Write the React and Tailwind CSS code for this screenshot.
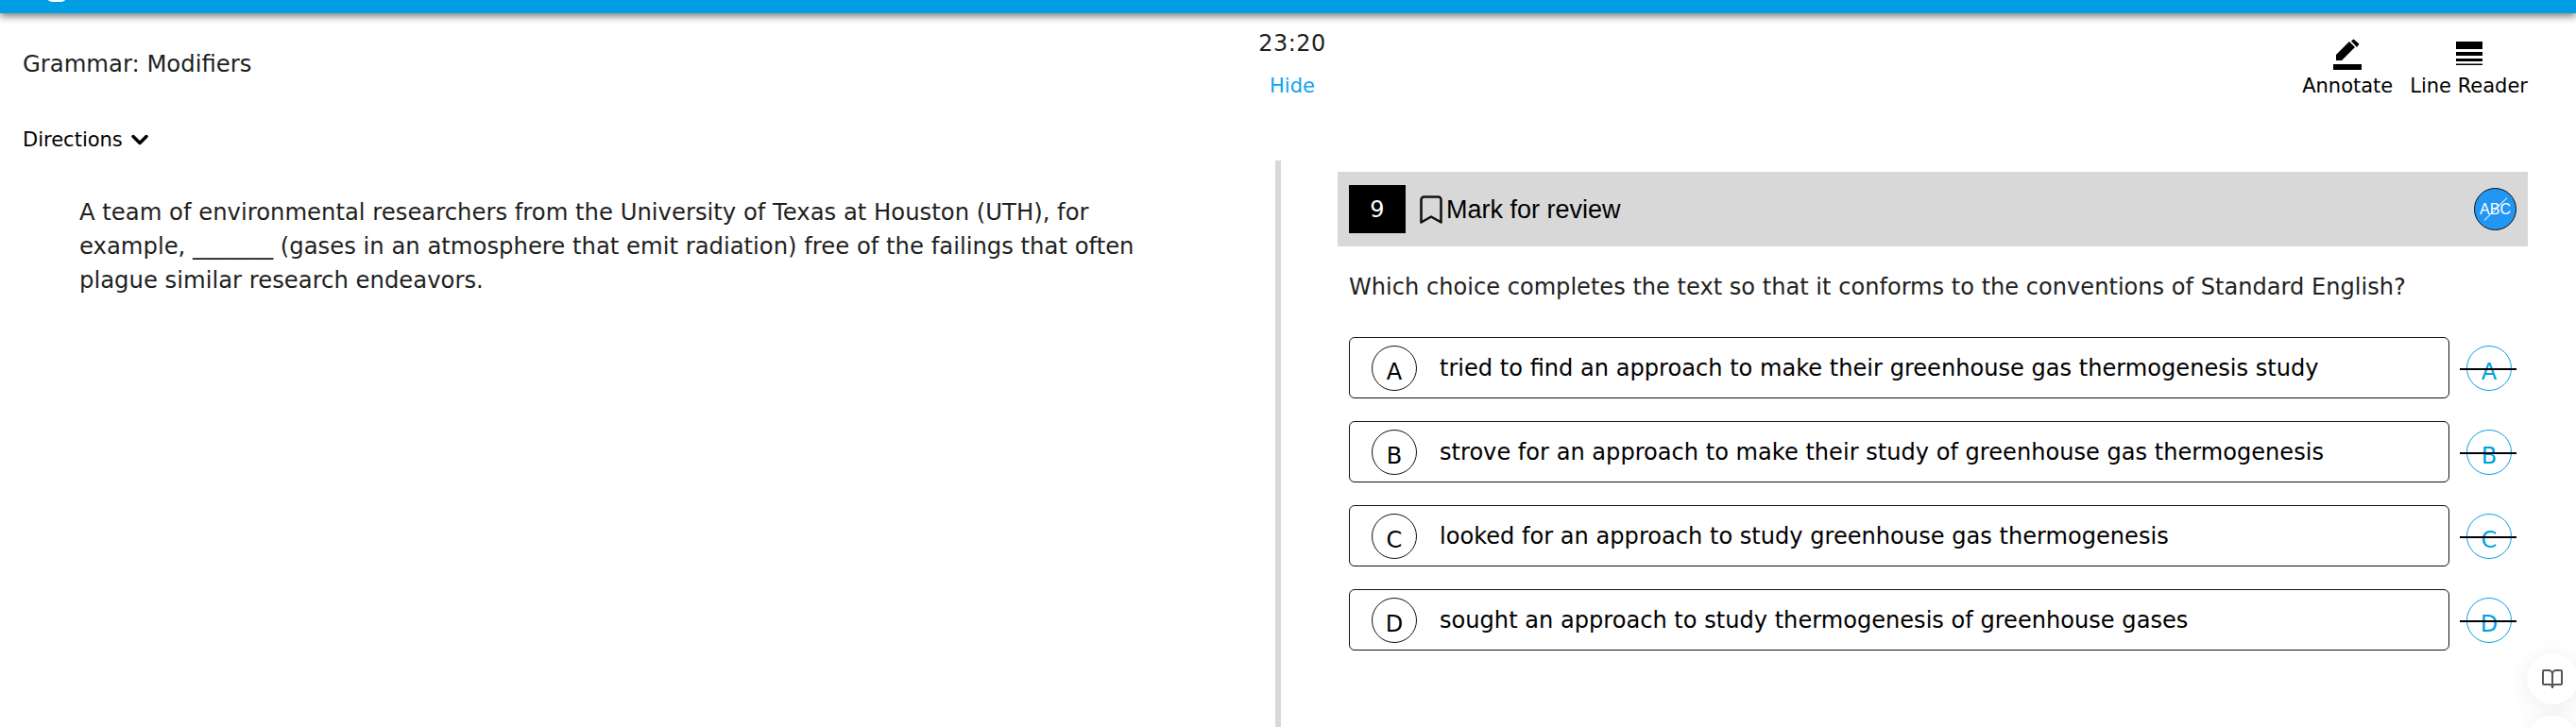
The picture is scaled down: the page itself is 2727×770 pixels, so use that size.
import React from "react";
import { Bookmark, BookOpen, ChevronDown } from "lucide-react";

const choices = [
  { letter: "A", text: "tried to find an approach to make their greenhouse gas thermogenesis study" },
  { letter: "B", text: "strove for an approach to make their study of greenhouse gas thermogenesis" },
  { letter: "C", text: "looked for an approach to study greenhouse gas thermogenesis" },
  { letter: "D", text: "sought an approach to study thermogenesis of greenhouse gases" },
];

const PencilIcon = () => (
  <svg width="30" height="34" viewBox="0 0 30 34" fill="#000">
    <rect x="0" y="27" width="30" height="6" />
    <path d="M3 23V17L17 3L23 9L9 23Z" />
    <path d="M19 1.5L21.5 -0.5L27.5 4.5L25 8Z" transform="translate(0 1)" />
  </svg>
);

const LinesIcon = () => (
  <svg width="28" height="26" viewBox="0 0 28 26" fill="#000">
    <rect x="0" y="0" width="28" height="8" />
    <rect x="0" y="11" width="28" height="4" />
    <rect x="0" y="18" width="28" height="3" />
    <rect x="0" y="23.5" width="28" height="1.5" />
  </svg>
);

const ChoiceRow = ({ letter, text }) => (
  <div className="flex items-center">
    <div className="flex h-[65px] w-[1165px] items-center rounded-[6px] border border-[#111] pl-[23px]">
      <div className="flex h-[48px] w-[48px] items-center justify-center rounded-full border border-[#111] pt-[8px] text-[24px] text-black">
        {letter}
      </div>
      <span className="ml-[24px] pt-[2px] text-[24.1px] text-black">{text}</span>
    </div>
    <div className="relative ml-[18px] flex h-[48px] w-[48px] items-center justify-center rounded-full border border-[#0a9fe6] pt-[8px] text-[24px] text-[#009fe3]">
      {letter}
      <div className="absolute left-[-8px] top-[23px] h-[2px] w-[60px] bg-black" />
    </div>
  </div>
);

const App = () => {
  return (
    <div className="relative flex h-[770px] w-[2727px] flex-col overflow-hidden bg-white font-['DejaVu_Sans',sans-serif] text-[#1f1f1f]">
      <div className="relative z-10 h-[14px] shrink-0 bg-[#009fe3] shadow-[0_3px_8px_rgba(0,0,0,0.55)]">
        <div className="absolute left-[50px] top-[-8px] h-[10px] w-[20px] rounded-full bg-white" />
      </div>

      <div className="flex h-[104px] shrink-0">
        <div className="flex w-[1268px] items-center pl-[24px] pt-[5px] text-[24.3px]">Grammar: Modifiers</div>
        <div className="flex w-[200px] flex-col items-center pt-[18px]">
          <div className="text-[24px] leading-[28px] tracking-[0.5px]">23:20</div>
          <div className="mt-[19px] text-[21px] leading-[24px] text-[#11a4ea]">Hide</div>
        </div>
        <div className="ml-auto flex gap-[18px] pr-[51px] pt-[27px] text-[21px] text-black">
          <div className="flex flex-col items-center">
            <PencilIcon />
            <span className="mt-[3px] leading-[26px]">Annotate</span>
          </div>
          <div className="flex flex-col items-center">
            <div className="flex h-[34px] items-start pt-[3px]">
              <LinesIcon />
            </div>
            <span className="mt-[3px] leading-[26px]">Line Reader</span>
          </div>
        </div>
      </div>

      <div className="flex h-[52px] shrink-0 items-start pl-[24px] pt-[17px] text-[21px] leading-[26px] text-black">
        Directions
        <ChevronDown size={28} strokeWidth={3} className="ml-[4px] mt-[-1px]" />
      </div>

      <div className="flex min-h-0 flex-1">
        <div className="w-[1350px] shrink-0 pl-[84px] pt-[37px]">
          <p className="w-[1260px] text-[24.3px] leading-[36px]">
            A team of environmental researchers from the University of Texas at Houston (UTH), for
            <br />
            example, _______ (gases in an atmosphere that emit radiation) free of the failings that often
            <br />
            plague similar research endeavors.
          </p>
        </div>
        <div className="h-full w-[6px] shrink-0 bg-[#d8d8d8]" />
        <div className="flex-1 pl-[60px] pr-[51px] pt-[12px]">
          <div className="flex h-[79px] items-center bg-[#d8d8d8] pl-[12px] pr-[12px]">
            <div className="flex h-[51px] w-[60px] items-center justify-center bg-black text-[24px] text-white">9</div>
            <Bookmark size={36} strokeWidth={1.7} className="ml-[9px] mt-[1px] text-[#111]" />
            <span className="-ml-[2px] pt-[2px] font-['Liberation_Sans',sans-serif] text-[27px] text-black">Mark for review</span>
            <div className="relative ml-auto flex h-[45px] w-[45px] items-center justify-center overflow-hidden rounded-full border border-[#111] bg-[#2196f3] font-['Liberation_Sans',sans-serif] text-[16px] text-white">
              ABC
              <div className="absolute left-[5px] top-[21px] h-px w-[34px] -rotate-45 bg-white" />
            </div>
          </div>
          <p className="mt-[29px] pl-[12px] text-[24.1px] leading-[28px]">
            Which choice completes the text so that it conforms to the conventions of Standard English?
          </p>
          <div className="mt-[39px] flex flex-col gap-[24px] pl-[12px]">
            {choices.map((choice) => (
              <ChoiceRow key={choice.letter} letter={choice.letter} text={choice.text} />
            ))}
          </div>
        </div>
      </div>

      <div className="absolute left-[2675px] top-[692px] flex h-[54px] w-[54px] items-center justify-center rounded-full bg-white shadow-[0_4px_24px_rgba(0,0,0,0.08)]">
        <BookOpen size={24} strokeWidth={2} className="text-[#555]" />
      </div>
      <div className="absolute left-[2675px] top-[758px] h-[54px] w-[54px] rounded-full bg-white shadow-[0_4px_24px_rgba(0,0,0,0.08)]" />
    </div>
  );
};

export default App;
